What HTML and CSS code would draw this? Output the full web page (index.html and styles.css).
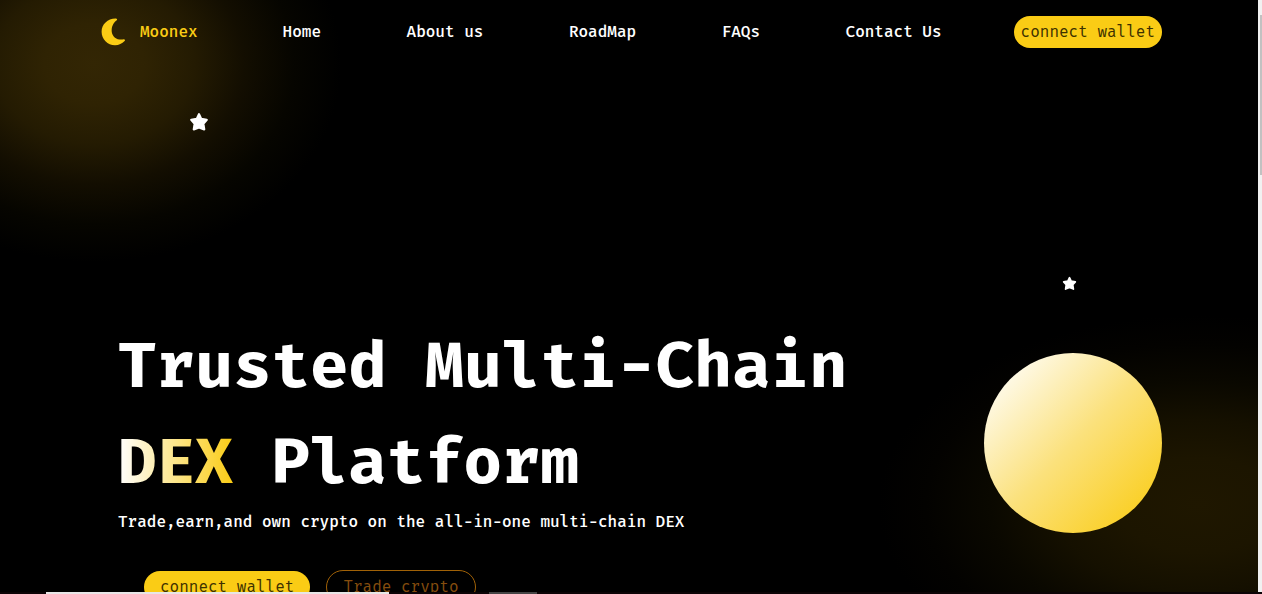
FILE: index.html
```html
<!DOCTYPE html>
<html lang="en">
<head>
<meta charset="utf-8">
<title>Moonex</title>
<link rel="stylesheet" href="styles.css">
</head>
<body>
<div class="viewport">
  <div class="page">
    <header class="header">
      <a class="logo" href="#">
        <svg class="logo-mark" viewBox="0 0 26 28" aria-hidden="true"><path d="M15.500 .4C17 .2 17.800 1.600 16.400 2.500C9.600 7.400 9.800 20.400 19.600 21.500C21.500 21.700 22.900 21.200 23.900 21.200C25 21.300 25.400 22.200 24.600 23C22 25.700 19 27.200 15 27.200C7.500 27.200 1.600 21.200 1.600 13.700C1.600 6.300 7.600 .5 15.500 .4Z"/></svg>
        <span>Moonex</span>
      </a>
      <nav class="nav">
        <a href="#">Home</a>
        <a href="#">About us</a>
        <a href="#">RoadMap</a>
        <a href="#">FAQs</a>
        <a href="#">Contact Us</a>
      </nav>
      <button class="button button-small" type="button">connect wallet</button>
    </header>
    <main class="hero">
      <div class="intro">
        <h1 class="title">Trusted Multi-Chain<br><span class="accent">DEX</span> Platform</h1>
        <p class="tagline">Trade,earn,and own crypto on the all-in-one multi-chain DEX</p>
        <div class="actions">
          <button class="button" type="button">connect wallet</button>
          <button class="button button-outline" type="button">Trade crypto</button>
        </div>
      </div>
      <div class="moon"></div>
    </main>
    <svg class="star star-left" viewBox="0 0 18 18" aria-hidden="true"><path d="M9 2L11 6.200L16 7L12.900 10.500L13.700 15.700L9 13.900L4.300 15.700L5.100 10.500L2 7L7 6.200Z"/></svg>
    <svg class="star star-right" viewBox="0 0 18 18" aria-hidden="true"><path d="M9 2L11 6.200L16 7L12.900 10.500L13.700 15.700L9 13.900L4.300 15.700L5.100 10.500L2 7L7 6.200Z"/></svg>
  </div>
  <div class="scroll-track"><div class="scroll-thumb"></div></div>
  <div class="status-strip"><div class="strip-light"></div><div class="strip-grey"></div></div>
</div>
</body>
</html>
```

FILE: styles.css
```css
* {
  box-sizing: border-box;
}

body {
  margin: 0;
  background: #000;
  color: #fff;
  font: 500 16px/24px "Fira Mono", "DejaVu Sans Mono", monospace;
}

a {
  color: inherit;
  text-decoration: none;
}

.viewport {
  display: grid;
  grid-template: minmax(0, 1fr) 2px / minmax(0, 1fr) 4px;
  height: 100vh;
  overflow: hidden;
}

.page {
  position: relative;
  overflow: hidden;
  padding: 16px 96px 0 100px;
  background:
    radial-gradient(ellipse 250px 200px at 94px 64px, #332604 0%, #2f2303 20%, #241b02 40%, #130e01 60%, #060500 80%, #000 99%, transparent 100%),
    radial-gradient(ellipse 320px 190px at calc(100% - 60px) 505px, #1f1700 0%, #1c1500 25%, #151000 45%, #0a0800 65%, #030200 85%, #000 100%),
    #000;
}

.header {
  display: flex;
  align-items: center;
}

.logo {
  display: flex;
  align-items: center;
  gap: 14px;
  color: #facc15;
}

.logo-mark {
  width: 26px;
  height: 28px;
  fill: #facc15;
}

.nav {
  display: flex;
  flex: 1;
  justify-content: space-between;
  margin: 0 72px 0 85px;
}

.button {
  padding: 4px 16px;
  border: 0;
  border-radius: 16px;
  background: #facc15;
  color: #3d3100;
  font: inherit;
  font-weight: 400;
}

.button-small {
  padding: 4px 7px;
}

.button-outline {
  border: 1px solid #a16207;
  border-radius: 17px;
  background: transparent;
  color: #854d0e;
}

.hero {
  display: flex;
  justify-content: space-between;
  align-items: flex-start;
  padding-top: 270px;
}

.intro {
  padding-left: 18px;
}

.title {
  margin: 0;
  font-size: 64px;
  line-height: 96px;
}

.accent {
  background: linear-gradient(to right, #fff, #facc15);
  background-clip: text;
  color: transparent;
}

.tagline {
  margin: 0 0 36px;
}

.actions {
  display: flex;
  align-items: center;
  gap: 16px;
  padding-left: 26px;
}

.moon {
  width: 178px;
  height: 180px;
  margin-top: 35px;
  border-radius: 50%;
  background: linear-gradient(to bottom right, #fff 5%, #fbe17c 50%, #facc15 95%);
}

.star {
  position: absolute;
  fill: #fff;
  stroke: #fff;
  stroke-linejoin: round;
  stroke-width: 2;
}

.star-left {
  top: 112px;
  left: 189px;
  width: 20px;
}

.star-right {
  top: 276px;
  right: 181px;
  width: 15px;
}

.scroll-track {
  padding: 15px 0 0 2px;
  background: #f1f1f1;
}

.scroll-thumb {
  height: 160px;
  background: #c1c1c1;
}

.status-strip {
  display: flex;
  grid-column: 1 / -1;
  gap: 100px;
  padding-left: 46px;
  background: #0c0406;
}

.strip-light {
  width: 343px;
  background: #e8e6e6;
}

.strip-grey {
  width: 48px;
  background: #444;
}
```
